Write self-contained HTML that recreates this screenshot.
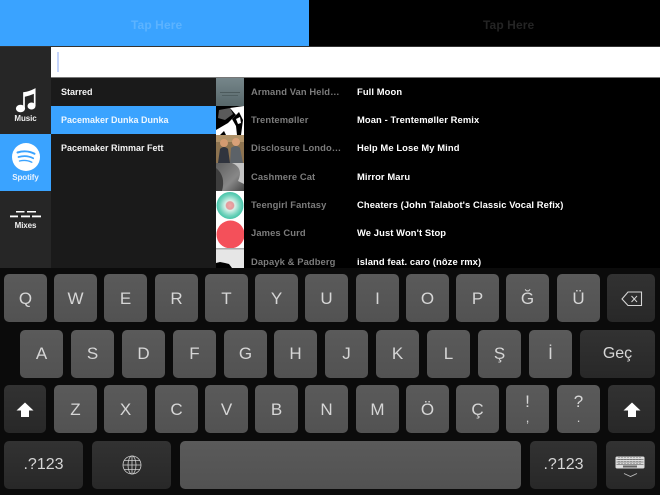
<!DOCTYPE html>
<html><head><meta charset="utf-8"><style>
html,body{margin:0;padding:0;background:#000}
#p{position:relative;width:660px;height:495px;overflow:hidden;background:#000;font-family:"Liberation Sans",sans-serif}
#p div{position:absolute}
.t{font-weight:bold;font-size:9.4px;line-height:12px;white-space:nowrap;letter-spacing:.1px}
.a{left:251px;color:#7c7c7c}
.s{left:357px;color:#fff}
.l{left:61px;color:#f4f4f4;font-size:9px;letter-spacing:0}
.c{color:#eee;font-weight:bold;font-size:8px;line-height:10px;text-align:center;left:0;width:51px;letter-spacing:-.1px}
.k{top:274px;width:43px;height:48px;border-radius:5px;background:linear-gradient(#5a5a5a,#525252);color:#d6d6d6;font-size:17px;line-height:50px;text-align:center}
.d{background:linear-gradient(#323232,#282828)}
.r2{top:330px;line-height:48px}.r3{top:385px;line-height:50px}.r4{top:441px;line-height:48px}
</style></head><body><div id="p">
<div style="left:0;top:0;width:309px;height:46px;background:#3aa3ff"></div>
<div style="left:131px;top:18px;font-size:12px;line-height:14px;font-weight:bold;color:#5cb3ff;letter-spacing:.1px">Tap Here</div>
<div style="left:483px;top:18px;font-size:12px;line-height:14px;font-weight:bold;color:#242424;letter-spacing:.1px">Tap Here</div>
<div style="left:0;top:46px;width:660px;height:1px;background:#333"></div>

<div style="left:0;top:47px;width:51px;height:221px;background:#262626"></div>
<div style="left:0;top:134px;width:51px;height:57px;background:#3aa3ff"></div>
<svg style="position:absolute;left:14px;top:88px" width="23" height="26" viewBox="0 0 23 26"><ellipse cx="6.500" cy="20.500" rx="4.600" ry="3.700" fill="#fff"/><ellipse cx="17.500" cy="18" rx="4" ry="3.500" fill="#fff"/><path d="M10 20.500V5Q15 4.500 20.700 1.500V18" fill="none" stroke="#fff" stroke-width="1.700"/><path d="M10 5Q15 4.500 20.700 1.500V5.500Q15 8 10 9Z" fill="#fff"/></svg>
<div class="c" style="top:114px">Music</div>
<svg style="position:absolute;left:12px;top:143px" width="28" height="28" viewBox="0 0 28 28"><circle cx="14" cy="14" r="14" fill="#fff"/><g fill="none" stroke="#3aa3ff" stroke-linecap="round"><path d="M5.500 9.500C11 7.800 17.500 8 22.500 10.800" stroke-width="2"/><path d="M6.500 14C11.500 12.600 17 13 21.200 15.300" stroke-width="1.700"/><path d="M7.500 18C11.500 17 16 17.300 19.800 19.200" stroke-width="1.400"/></g></svg>
<div class="c" style="top:173px;color:#e8f3ff">Spotify</div>
<svg style="position:absolute;left:10px;top:209px" width="32" height="11" viewBox="0 0 32 11"><g fill="#fff"><rect x="6" y="2" width="8.500" height="1.500"/><rect x="17" y="2" width="9" height="1.500"/><rect x="0" y="6.500" width="8" height="1.800"/><rect x="11" y="6.500" width="9" height="1.800"/><rect x="22" y="6.500" width="9" height="1.800"/></g></svg>
<div class="c" style="top:221px">Mixes</div>

<div style="left:51px;top:47px;width:609px;height:30px;background:#fff"></div>
<div style="left:57px;top:52px;width:2px;height:20px;background:#c6d5fb"></div>
<div style="left:51px;top:77px;width:609px;height:1px;background:#777"></div>

<div style="left:51px;top:78px;width:165px;height:190px;background:#1a1a1a"></div>
<div style="left:51px;top:106px;width:165px;height:28px;background:#3aa3ff"></div>
<div class="t l" style="top:86px">Starred</div>
<div class="t l" style="top:114px;color:#eef7ff">Pacemaker Dunka Dunka</div>
<div class="t l" style="top:142px">Pacemaker Rimmar Fett</div>

<svg style="position:absolute;left:216px;top:78px" width="28" height="190" viewBox="0 0 28 190">
<defs>
<linearGradient id="g1" x1="0" y1="0" x2="0" y2="1"><stop offset="0" stop-color="#76868a"/><stop offset="1" stop-color="#566669"/></linearGradient>
<linearGradient id="g4" x1="0" y1="0" x2="1" y2="1"><stop offset="0" stop-color="#5e5e5e"/><stop offset=".6" stop-color="#888"/><stop offset="1" stop-color="#444"/></linearGradient>
<radialGradient id="g5"><stop offset="0" stop-color="#f0a8a8"/><stop offset=".28" stop-color="#e29a9c"/><stop offset=".36" stop-color="#d8f2ea"/><stop offset=".75" stop-color="#74d4be"/><stop offset="1" stop-color="#45c4a8"/></radialGradient>
</defs>
<rect width="28" height="29" fill="url(#g1)"/><rect x="4" y="14" width="20" height="1" fill="#4c5a5c"/><rect x="6" y="17" width="16" height="1" fill="#4f5e60"/>
<rect y="28" width="28" height="29" fill="#000"/>
<path d="M14 30L28 28V57H0V52L12 45L20 37Z" fill="#fff"/><path d="M3 32L14 30L17 36L9 42L2 40Z" fill="#5a5a5a"/><path d="M16 41L23 34L27 42L25 57H21L20 48Z" fill="#000"/><path d="M20 41L24 39L25 45L22 46Z" fill="#fff"/><path d="M4 57L8 53L10 57Z" fill="#000"/>
<rect y="57" width="28" height="28" fill="#8d7350"/><rect y="57" width="28" height="7" fill="#b09268"/><ellipse cx="8" cy="65" rx="4" ry="4" fill="#d39a70"/><ellipse cx="20" cy="64" rx="4" ry="4" fill="#d8a078"/><path d="M2 85L4 71Q8 67 12 71L14 85Z" fill="#30343e"/><path d="M14 85L15 70Q20 66 24 70L27 85Z" fill="#5c6268"/>
<rect y="85" width="28" height="28" fill="url(#g4)"/><path d="M16 85Q28 90 22 103L28 106V85Z" fill="#c4c4c4"/><path d="M0 90Q10 98 6 113H0Z" fill="#3e3e3e"/>
<rect y="113" width="28" height="29" fill="#fff"/><circle cx="14" cy="127.500" r="13.500" fill="url(#g5)"/>
<rect y="142" width="28" height="28" fill="#fff"/><circle cx="14.500" cy="156.500" r="14" fill="#f4505a"/>
<rect y="170" width="28" height="20" fill="#e6e6e6"/><rect y="170" width="28" height="1.500" fill="#aaa"/><path d="M0 190V185L4 184L9 185L13 186L16 190Z" fill="#000"/>
</svg>

<div class="t a" style="top:86px">Armand Van Held…</div><div class="t s" style="top:86px">Full Moon</div>
<div class="t a" style="top:114px">Trentemøller</div><div class="t s" style="top:114px">Moan - Trentemøller Remix</div>
<div class="t a" style="top:142px">Disclosure Londo…</div><div class="t s" style="top:142px">Help Me Lose My Mind</div>
<div class="t a" style="top:171px">Cashmere Cat</div><div class="t s" style="top:171px">Mirror Maru</div>
<div class="t a" style="top:199px">Teengirl Fantasy</div><div class="t s" style="top:199px">Cheaters (John Talabot's Classic Vocal Refix)</div>
<div class="t a" style="top:227px">James Curd</div><div class="t s" style="top:227px">We Just Won't Stop</div>
<div class="t a" style="top:256px">Dapayk &amp; Padberg</div><div class="t s" style="top:256px">island feat. caro (nôze rmx)</div>

<div style="left:0;top:268px;width:660px;height:227px;background:#0b0b0b"></div>

<div class="k" style="left:4px">Q</div><div class="k" style="left:54px">W</div><div class="k" style="left:104px">E</div><div class="k" style="left:155px">R</div><div class="k" style="left:205px">T</div><div class="k" style="left:255px">Y</div><div class="k" style="left:305px">U</div><div class="k" style="left:356px">I</div><div class="k" style="left:406px">O</div><div class="k" style="left:456px">P</div><div class="k" style="left:506px">Ğ</div><div class="k" style="left:557px">Ü</div>
<div class="k d" style="left:607px;width:48px"></div>
<svg style="position:absolute;left:621px;top:291px" width="22" height="16" viewBox="0 0 22 16"><path d="M7 1H20.500V14.500H7L1 8Z" fill="none" stroke="#d6d6d6" stroke-width="1.100"/><path d="M10.500 5L16 11M16 5L10.500 11" stroke="#d6d6d6" stroke-width="1"/></svg>

<div class="k r2" style="left:20px">A</div><div class="k r2" style="left:71px">S</div><div class="k r2" style="left:122px">D</div><div class="k r2" style="left:173px">F</div><div class="k r2" style="left:224px">G</div><div class="k r2" style="left:274px">H</div><div class="k r2" style="left:325px">J</div><div class="k r2" style="left:376px">K</div><div class="k r2" style="left:427px">L</div><div class="k r2" style="left:478px">Ş</div><div class="k r2" style="left:529px">İ</div>
<div class="k d r2" style="left:580px;width:75px;font-size:16px">Geç</div>

<div class="k d r3" style="left:4px;width:42px"></div>
<svg style="position:absolute;left:16px;top:402px" width="18" height="16" viewBox="0 0 18 16"><path d="M9 .5L17.500 8.500H13V15H5V8.500H.5Z" fill="#fff"/></svg>
<div class="k r3" style="left:54px">Z</div><div class="k r3" style="left:104px">X</div><div class="k r3" style="left:155px">C</div><div class="k r3" style="left:205px">V</div><div class="k r3" style="left:255px">B</div><div class="k r3" style="left:305px">N</div><div class="k r3" style="left:356px">M</div><div class="k r3" style="left:406px">Ö</div><div class="k r3" style="left:456px">Ç</div>
<div class="k r3" style="left:506px"><div style="left:0;width:43px;top:8px;line-height:18px">!</div><div style="left:0;width:43px;top:26px;line-height:14px;font-size:13px">,</div></div>
<div class="k r3" style="left:557px"><div style="left:0;width:43px;top:8px;line-height:18px">?</div><div style="left:0;width:43px;top:26px;line-height:14px;font-size:13px">.</div></div>
<div class="k d r3" style="left:608px;width:47px"></div>
<svg style="position:absolute;left:623px;top:402px" width="18" height="16" viewBox="0 0 18 16"><path d="M9 .5L17.500 8.500H13V15H5V8.500H.5Z" fill="#fff"/></svg>

<div class="k d r4" style="left:4px;width:79px;font-size:16px">.?123</div>
<div class="k d r4" style="left:92px;width:79px"></div>
<svg style="position:absolute;left:122px;top:455px" width="20" height="20" viewBox="0 0 20 20" fill="none" stroke="#cfcfcf" stroke-width=".8"><circle cx="10" cy="10" r="9"/><ellipse cx="10" cy="10" rx="4" ry="9"/><path d="M10 1V19M1 10H19M2.500 5.500H17.500M2.500 14.500H17.500"/></svg>
<div class="k r4" style="left:180px;width:341px"></div>
<div class="k d r4" style="left:530px;width:67px;font-size:16px">.?123</div>
<div class="k d r4" style="left:606px;width:49px"></div>
<svg style="position:absolute;left:615px;top:456px" width="31" height="23" viewBox="0 0 31 23"><rect x=".5" y=".5" width="29" height="12" rx="1.500" fill="#ddd"/><g stroke="#444" stroke-width=".6"><path d="M1.500 3.500H28.500M1.500 6H28.500M1.500 8.500H28.500"/><path d="M4 1V9M7 1V9M10 1V9M13 1V9M16 1V9M19 1V9M22 1V9M25 1V9" stroke-dasharray="1 1"/></g><rect x="8" y="9.500" width="14" height="2" fill="#666"/><path d="M9 17.500L15.500 20.500L22 17.500" fill="none" stroke="#bbb" stroke-width=".9"/></svg>
</div></body></html>
